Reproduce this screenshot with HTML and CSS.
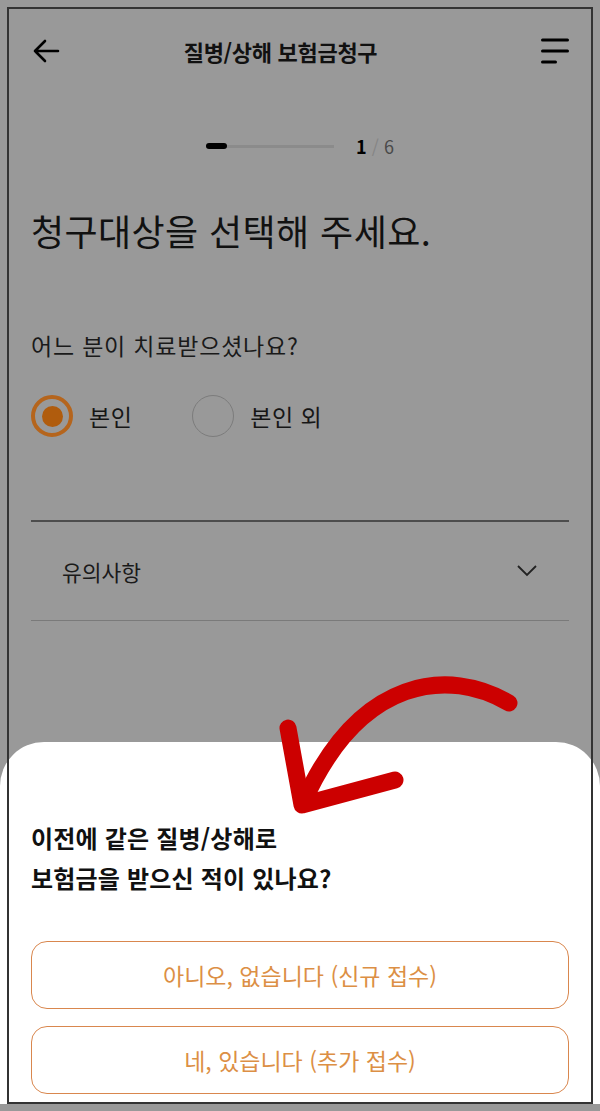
FILE: index.html
```html
<!DOCTYPE html>
<html lang="ko">
    <head>
        <meta charset="UTF-8" />
        <meta name="viewport" content="width=device-width, initial-scale=1.0" />
        <title>질병/상해 보험금청구</title>
        <link rel="stylesheet" href="styles.css">
    </head>
    <body>
        <div class="page">
            <div class="header">
                <svg class="icon-back" width="28" height="24" viewBox="0 0 28 24">
                    <path d="M26 12H3M13 2L3 12l10 10" fill="none" stroke="#000" stroke-width="2.6" stroke-linecap="round" stroke-linejoin="round" />
                </svg>
                <h1 class="title">질병/상해 보험금청구</h1>
                <svg class="icon-menu" width="28" height="26" viewBox="0 0 28 26">
                    <path d="M1.5 2h25M1.5 13h25M1.5 24h13" fill="none" stroke="#000" stroke-width="3" stroke-linecap="round" />
                </svg>
            </div>

            <div class="progress">
                <div class="progress-track"><div class="progress-fill"></div></div>
                <div class="progress-text"><b>1</b> <span class="slash">/</span> <span class="total">6</span></div>
            </div>

            <h2 class="heading">청구대상을 선택해 주세요.</h2>

            <p class="question">어느 분이 치료받으셨나요?</p>
            <div class="radio-group">
                <label class="radio checked"><span class="radio-circle"></span>본인</label>
                <label class="radio"><span class="radio-circle"></span>본인 외</label>
            </div>

            <div class="notice">
                <span>유의사항</span>
                <svg width="22" height="14" viewBox="0 0 22 14">
                    <path d="M2 2l9 9 9-9" fill="none" stroke="#222" stroke-width="1.8" />
                </svg>
            </div>
        </div>

        <!-- Bottom sheet -->
        <div class="sheet">
            <p class="sheet-title">이전에 같은 질병/상해로<br>보험금을 받으신 적이 있나요?</p>
            <div class="sheet-actions">
                <button class="sheet-btn">아니오, 없습니다 (신규 접수)</button>
                <button class="sheet-btn">네, 있습니다 (추가 접수)</button>
            </div>
        </div>

        <svg class="hint-arrow" width="260" height="170" viewBox="0 0 260 170">
            <g fill="none" stroke="#cc0000" stroke-width="17" stroke-linecap="round" stroke-linejoin="round">
                <path d="M239 48C180 13 90 20 33 148" />
                <path d="M18 73L32 150L125 125" />
            </g>
        </svg>

        <div class="frame"></div>
    </body>
</html>
```

FILE: styles.css
```css
* {
    box-sizing: border-box;
}
body {
    margin: 0;
    height: 1111px;
    overflow: hidden;
    position: relative;
    background-color: #999;
    font-family: "Noto Sans CJK KR", "Noto Sans", sans-serif;
    color: #141414;
}
.page {
    padding: 0 31px;
}
.header {
    display: flex;
    align-items: center;
    height: 50px;
    margin-top: 26px;
}
.title {
    flex: 1;
    margin: 0;
    padding-right: 40px;
    text-align: center;
    font-size: 22px;
    font-weight: 700;
    letter-spacing: -0.3px;
    color: #111;
}
.icon-back {
    margin-left: 1px;
}
.progress {
    display: flex;
    align-items: center;
    justify-content: center;
    gap: 22px;
    height: 20px;
    margin-top: 60px;
}
.progress-track {
    width: 128px;
    height: 3px;
    background-color: #8b8b8b;
    display: flex;
    align-items: center;
}
.progress-fill {
    width: 21px;
    height: 6px;
    border-radius: 3px;
    background-color: #000;
}
.progress-text {
    font-size: 18px;
    color: #4a4a4a;
}
.progress-text b {
    color: #000;
}
.slash {
    color: #858585;
}
.heading {
    margin: 50px 0 0;
    font-size: 36px;
    font-weight: 400;
    line-height: 48px;
    letter-spacing: 0.4px;
    color: #111;
}
.question {
    margin: 76px 0 0;
    font-size: 23px;
    line-height: 30px;
    letter-spacing: 0.8px;
    color: #1a1a1a;
}
.radio-group {
    display: flex;
    gap: 60px;
    margin-top: 35px;
}
.radio {
    display: flex;
    align-items: center;
    gap: 16px;
    font-size: 23px;
    letter-spacing: 0.5px;
    color: #161616;
}
.radio-circle {
    width: 42px;
    height: 42px;
    border-radius: 50%;
    border: 1.5px solid #7c7c7c;
    display: flex;
    align-items: center;
    justify-content: center;
}
.radio.checked .radio-circle {
    border: 4px solid #b5651d;
}
.radio.checked .radio-circle::after {
    content: "";
    width: 21px;
    height: 21px;
    border-radius: 50%;
    background-color: #b05c0d;
}
.notice {
    display: flex;
    align-items: center;
    justify-content: space-between;
    height: 101px;
    margin-top: 83px;
    padding: 0 31px;
    border-top: 2px solid #4d4d4d;
    border-bottom: 1.5px solid #7a7a7a;
    font-size: 21.5px;
    color: #1a1a1a;
}
.sheet {
    position: absolute;
    left: 0;
    right: 0;
    top: 742px;
    height: 362px;
    padding: 76px 31px 0;
    background-color: #fff;
    border-radius: 44px 44px 0 0;
}
.sheet-title {
    margin: 0 0 43px;
    font-size: 24px;
    font-weight: 700;
    line-height: 40px;
    letter-spacing: 0.2px;
    color: #111;
}
.sheet-actions {
    display: flex;
    flex-direction: column;
    gap: 17px;
}
.sheet-btn {
    height: 68px;
    background-color: #fff;
    border: 1.5px solid #d9874e;
    border-radius: 16px;
    font-family: inherit;
    font-size: 23px;
    color: #dc8f45;
}
.hint-arrow {
    position: absolute;
    left: 270px;
    top: 655px;
}
.frame {
    position: absolute;
    left: 7px;
    top: 7px;
    width: 586px;
    height: 1097px;
    border: 2px solid #333;
    pointer-events: none;
}
```
